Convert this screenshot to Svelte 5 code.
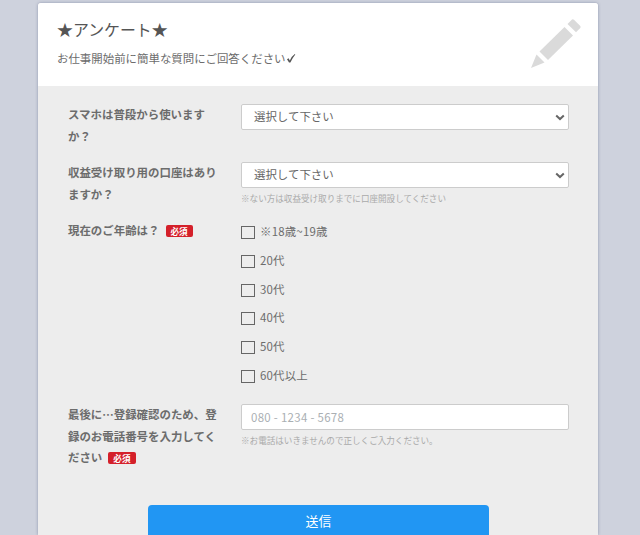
<script>
  let device = '';
  let account = '';
  let phone = '';
  let selectedAges = [];

  const ages = ['※18歳~19歳', '20代', '30代', '40代', '50代', '60代以上'];

  function handleSubmit(event) {
    event.preventDefault();
  }
</script>

<div class="card">
  <header class="card-header">
    <div>
      <h1>★アンケート★</h1>
      <p class="lead">
        お仕事開始前に簡単な質問にご回答ください<svg class="check" viewBox="0 0 10 11" aria-hidden="true"><path d="M1 6.2 2.6 5.3 3.8 7.5Q5.8 3 8.8 1L9.3 1.4Q6.3 5 4.4 9.6H3Z" /></svg>
      </p>
    </div>
    <svg class="pencil" viewBox="0 0 50 50" aria-hidden="true">
      <path d="M0 49 5.5 35.5 13.5 43.5Z" />
      <path d="M8.5 32.5 33.5 8 42 16.5 17 41Z" />
      <path d="M36.5 5 41 .6Q42 0 43 .8L49.3 7Q50 8 49.3 9L45 13.3Z" />
    </svg>
  </header>

  <form on:submit={handleSubmit}>
    <div class="row first">
      <label class="title" for="device">スマホは普段から使いますか？</label>
      <div class="field">
        <div class="select-box">
          <select id="device" bind:value={device}>
            <option value="">選択して下さい</option>
            <option value="yes">はい</option>
            <option value="no">いいえ</option>
          </select>
          <svg class="arrow" viewBox="0 0 10 7" aria-hidden="true"><path d="M1.2 1.4 5 5 8.8 1.4" /></svg>
        </div>
      </div>
    </div>

    <div class="row second">
      <label class="title" for="account">収益受け取り用の口座はありますか？</label>
      <div class="field">
        <div class="select-box">
          <select id="account" bind:value={account}>
            <option value="">選択して下さい</option>
            <option value="yes">はい</option>
            <option value="no">いいえ</option>
          </select>
          <svg class="arrow" viewBox="0 0 10 7" aria-hidden="true"><path d="M1.2 1.4 5 5 8.8 1.4" /></svg>
        </div>
        <p class="note">※ない方は収益受け取りまでに口座開設してください</p>
      </div>
    </div>

    <div class="row third">
      <div class="title">現在のご年齢は？<span class="required">必須</span></div>
      <div class="field ages">
        {#each ages as age}
          <label class="age">
            <input type="checkbox" value={age} bind:group={selectedAges} />
            <span>{age}</span>
          </label>
        {/each}
      </div>
    </div>

    <div class="row">
      <label class="title" for="phone">最後に…登録確認のため、登録のお電話番号を入力してください<span class="required">必須</span></label>
      <div class="field">
        <input id="phone" class="text-input" type="tel" bind:value={phone} placeholder="080 - 1234 - 5678" />
        <p class="note">※お電話はいきませんので正しくご入力ください。</p>
      </div>
    </div>

    <button class="submit" type="submit">送信</button>
  </form>
</div>

<style>
  :global(body) {
    background: #ced2dd;
    color: #6c6c6c;
    font-family: "Noto Sans CJK JP", sans-serif;
    overflow: hidden;
  }

  * {
    box-sizing: border-box;
  }

  .card {
    width: 560px;
    height: calc(100vh - 3px);
    margin: 3px 0 0 38px;
    background: #ededed;
    border-radius: 3px 3px 0 0;
    box-shadow: 0 0 3px rgba(70, 80, 120, 0.5);
    overflow: hidden;
  }

  .card-header {
    display: flex;
    justify-content: space-between;
    height: 83px;
    padding: 15px 17px 0 19px;
    background: #fff;
  }

  h1 {
    margin: 0;
    color: #555;
    font-size: 15.9px;
    font-weight: 400;
    line-height: 24px;
  }

  .lead {
    margin: 6px 0 0;
    font-size: 11.45px;
    line-height: 20px;
  }

  .check {
    width: 10px;
    height: 11px;
    vertical-align: -1px;
    fill: #555;
  }

  .pencil {
    width: 50px;
    height: 50px;
    margin-top: 1px;
    fill: #dadada;
  }

  form {
    padding: 18px 29px 0 30px;
  }

  .row {
    display: flex;
  }

  .first {
    min-height: 58px;
  }

  .second {
    min-height: 58px;
  }

  .third {
    min-height: 184px;
  }

  .title {
    width: 173px;
    padding-right: 21px;
    font-size: 11.45px;
    font-weight: 600;
    line-height: 21.5px;
  }

  .required {
    display: inline-block;
    height: 12px;
    margin-left: 6px;
    padding: 0 5px;
    border-radius: 2px;
    background: #d4202a;
    color: #fff;
    font-size: 8.6px;
    font-weight: 700;
    line-height: 12px;
  }

  .field {
    flex: 1;
  }

  .select-box {
    position: relative;
  }

  select,
  .text-input {
    display: block;
    width: 100%;
    height: 26px;
    border: 1px solid #ccc;
    border-radius: 2px;
    background: #fff;
    color: #666;
    font-family: inherit;
    font-size: 11.45px;
  }

  select {
    padding: 0 12px 2px;
    appearance: none;
  }

  .text-input {
    padding: 0 9px;
  }

  .text-input::placeholder {
    color: #aaafb3;
    letter-spacing: 0.3px;
    opacity: 1;
  }

  .arrow {
    position: absolute;
    top: 10px;
    right: 4px;
    width: 10px;
    height: 7px;
    fill: none;
    stroke: #666;
    stroke-width: 2;
    pointer-events: none;
  }

  .note {
    margin: 4px 0 0;
    color: #aaa;
    font-size: 8.57px;
    line-height: 13px;
  }

  .ages {
    display: grid;
    align-content: start;
    grid-auto-rows: 28.75px;
    padding-top: 1px;
  }

  .age {
    display: flex;
    align-items: flex-start;
    gap: 5px;
    font-size: 11.45px;
    letter-spacing: 0.2px;
    line-height: 21.5px;
  }

  .age input {
    width: 14px;
    height: 13px;
    margin: 5px 0 0;
    border: 1px solid #666;
    appearance: none;
  }

  .age input:checked {
    background: #2196f3;
  }

  .submit {
    display: block;
    width: 341px;
    height: 34px;
    margin: 36px 0 0 80px;
    padding: 0 0 2px;
    border: 0;
    border-radius: 4px;
    background: #2196f3;
    color: #fff;
    font-family: inherit;
    font-size: 12.9px;
    cursor: pointer;
  }
</style>
